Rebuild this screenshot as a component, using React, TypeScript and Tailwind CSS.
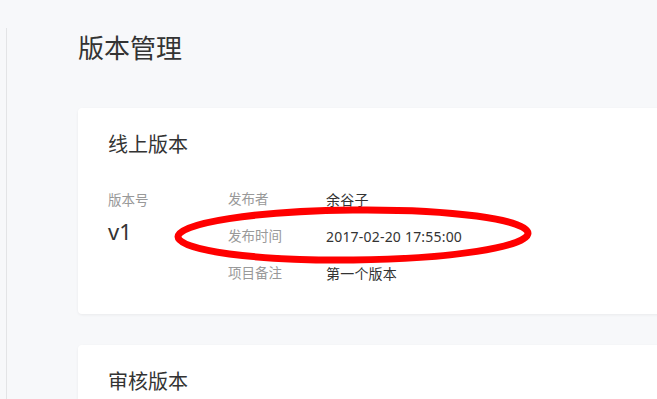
import React from "react";

const font = { fontFamily: '"Noto Sans", "Noto Sans CJK SC", sans-serif' } as React.CSSProperties;

function Row({ label, value }: { label: string; value: string }) {
  return (
    <div className="flex h-[37px] items-center">
      <div className="w-[98px] text-[13.5px] text-[#999999]">{label}</div>
      <div className="text-[14px] tracking-[0.2px] text-[#333333]">{value}</div>
    </div>
  );
}

export default function App() {
  return (
    <div className="relative h-[399px] w-[657px] overflow-hidden bg-[#f7f8fa]" style={font}>
      <div className="flex h-full">
        <div className="w-[6px] shrink-0" />
        <div className="mt-[28px] flex-1 border-l border-[#e3e4e6] pl-[71px]">
          <h1 className="mt-[2px] text-[26px] leading-[36px] text-[#333333]">版本管理</h1>
          <div className="mt-[42px] w-[640px] rounded-[4px] bg-white pl-[30px] pt-[23px] pb-[22px] shadow-[0_1px_3px_rgba(0,0,0,0.06)]">
            <h2 className="text-[20px] leading-[28px] text-[#333333]">线上版本</h2>
            <div className="mt-[28px] flex">
              <div className="w-[120px]">
                <div className="mt-[3px] text-[13.5px] leading-[20px] text-[#999999]">版本号</div>
                <div className="mt-[6px] text-[22px] leading-[30px] text-[#333333]">v1</div>
              </div>
              <div className="-mt-[6px]">
                <Row label="发布者" value="余谷子" />
                <Row label="发布时间" value="2017-02-20 17:55:00" />
                <Row label="项目备注" value="第一个版本" />
              </div>
            </div>
          </div>
          <div className="mt-[31px] h-[200px] w-[640px] rounded-[4px] bg-white pl-[30px] pt-[23px] shadow-[0_1px_3px_rgba(0,0,0,0.06)]">
            <h2 className="text-[20px] leading-[28px] text-[#333333]">审核版本</h2>
          </div>
        </div>
      </div>
      <svg className="pointer-events-none absolute left-[172px] top-[204px]" width="364" height="62" viewBox="0 0 364 62">
        <ellipse cx="181" cy="31" rx="175" ry="25" fill="none" stroke="#ff0000" strokeWidth="7" transform="rotate(-0.6 181 31)" />
      </svg>
    </div>
  );
}
